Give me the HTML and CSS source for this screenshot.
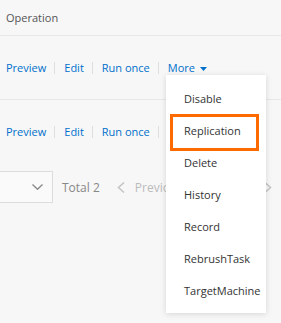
FILE: index.html
```html
<!DOCTYPE html>
<html lang="en">
<head>
  <meta charset="UTF-8">
  <title>Task list</title>
  <link rel="stylesheet" href="styles.css">
</head>
<body>

  <div class="table">
    <div class="thead">Operation</div>

    <div class="row">
      <a class="link">Preview</a><span class="sep"></span>
      <a class="link">Edit</a><span class="sep"></span>
      <a class="link">Run once</a><span class="sep"></span>
      <a class="link more">More
        <svg width="7" height="4" viewBox="0 0 7 4"><path d="M0 0h7L3.5 4z" fill="#0070cc"/></svg>
      </a>
    </div>

    <div class="row">
      <a class="link">Preview</a><span class="sep"></span>
      <a class="link">Edit</a><span class="sep"></span>
      <a class="link">Run once</a><span class="sep"></span>
      <a class="link more">More
        <svg width="7" height="4" viewBox="0 0 7 4"><path d="M0 0h7L3.5 4z" fill="#0070cc"/></svg>
      </a>
    </div>
  </div>

  <div class="pager">
    <div class="size-select">
      <span>10</span>
      <svg width="11" height="6" viewBox="0 0 11 6"><path d="M0.5 0.5L5.5 5.3L10.5 0.5" fill="none" stroke="#888" stroke-width="1.3"/></svg>
    </div>
    <span class="total">Total 2</span>
    <span class="page-btn prev">
      <svg width="8" height="11" viewBox="0 0 8 11"><path d="M7 0.5L1.5 5.5L7 10.5" fill="none" stroke="#c4c4c4" stroke-width="1.5"/></svg>
      Previous
    </span>
    <span class="page-num">1</span>
    <span class="page-btn next">
      Next
      <svg width="8" height="11" viewBox="0 0 8 11"><path d="M1 0.5L6.5 5.5L1 10.5" fill="none" stroke="#c4c4c4" stroke-width="1.5"/></svg>
    </span>
  </div>

  <!-- dropdown opened from the first "More" -->
  <ul class="menu">
    <li>Disable</li>
    <li>Replication</li>
    <li>Delete</li>
    <li>History</li>
    <li>Record</li>
    <li>RebrushTask</li>
    <li>TargetMachine</li>
    <span class="mark"></span>
  </ul>

</body>
</html>
```

FILE: styles.css
```css
body {
  margin: 0;
  background: #f7f7f7;
  font-family: 'Open Sans', 'Noto Sans', sans-serif;
  font-size: 11px;
  color: #333;
  overflow: hidden;
}
.thead {
  height: 35px;
  line-height: 36px;
  padding-left: 6px;
  color: #555;
  border-bottom: 1px solid #e8e8e8;
}
.row {
  height: 63px;
  display: flex;
  align-items: center;
  padding-left: 6px;
  border-bottom: 1px solid #e8e8e8;
}
.row:last-child {
  border-bottom: none;
}
.link {
  color: #0070cc;
  cursor: pointer;
  white-space: nowrap;
}
.more svg {
  margin-left: 2px;
  vertical-align: middle;
}
.sep {
  width: 1px;
  height: 12px;
  background: #dedede;
  margin: 0 9px 0 8px;
}
.pager {
  display: flex;
  align-items: center;
  margin-top: 8px;
  white-space: nowrap;
  color: #888;
  overflow: hidden;
}
.pager > * {
  flex-shrink: 0;
}
.size-select {
  box-sizing: border-box;
  width: 80px;
  height: 32px;
  margin-left: -27px;
  padding: 0 9px 0 10px;
  display: flex;
  align-items: center;
  justify-content: space-between;
  background: #fafafa;
  border: 1px solid #dcdcdc;
}
.size-select span {
  visibility: hidden;
}
.total {
  margin-left: 9px;
  font-size: 12px;
}
.page-btn {
  display: flex;
  align-items: center;
  gap: 10px;
  color: #bbb;
  font-size: 12px;
}
.prev {
  margin-left: 17px;
}
.page-num {
  margin: 0 16px;
  color: #0070cc;
}
.next {
  margin-left: 6px;
}
.menu {
  position: absolute;
  left: 166px;
  top: 75px;
  width: 100px;
  margin: 0;
  padding: 8px 0 6px;
  list-style: none;
  background: #fff;
  box-shadow: 0 1px 6px rgba(0,0,0,0.14);
}
.menu li {
  height: 32px;
  line-height: 32px;
  padding-left: 18px;
  color: #333;
  white-space: nowrap;
}
.mark {
  position: absolute;
  left: 4px;
  top: 39px;
  width: 89px;
  height: 37px;
  box-sizing: border-box;
  border: 3px solid #ff6a00;
}
```
